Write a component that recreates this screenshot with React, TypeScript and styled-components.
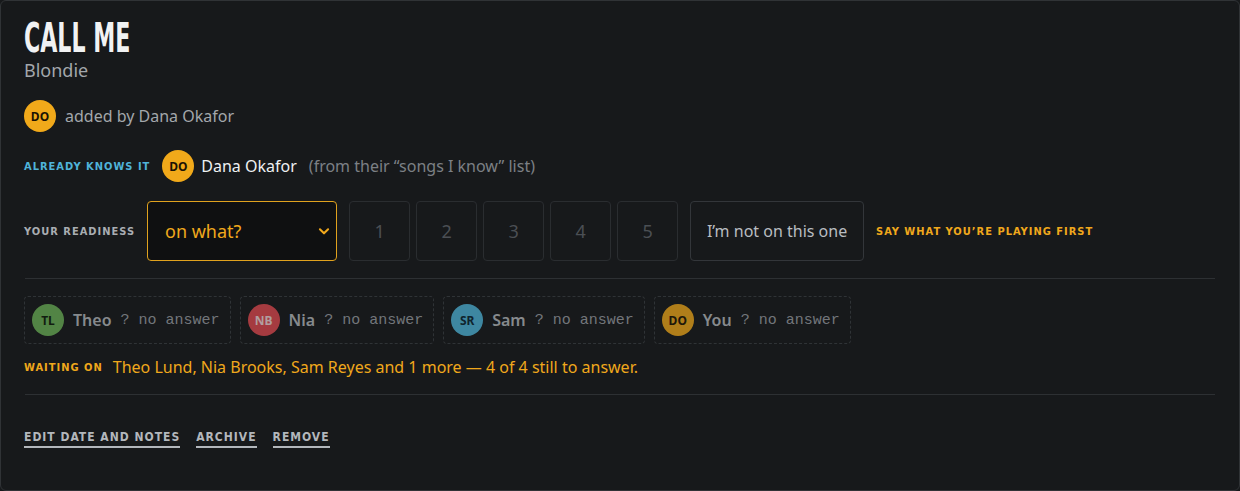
import styled, { createGlobalStyle } from 'styled-components';

const GlobalStyle = createGlobalStyle`
  html, body {
    margin: 0;
    padding: 0;
    background: #17191b;
  }
  * {
    box-sizing: border-box;
  }
`;

const people = [
  { initials: 'TL', name: 'Theo', color: '#6cb257', ink: '#10200c' },
  { initials: 'NB', name: 'Nia', color: '#e24a50', ink: '#f3d8d8' },
  { initials: 'SR', name: 'Sam', color: '#4fb6da', ink: '#0c2a36' },
  { initials: 'DO', name: 'You', color: '#f1a91a', ink: '#231703' },
];

export default function App() {
  return (
    <>
      <GlobalStyle />
      <Card>
        <Header>
          <Title>CALL ME</Title>
          <Artist>Blondie</Artist>
        </Header>

        <AddedRow>
          <Avatar $bg="#f1a91a" $ink="#1a1204">DO</Avatar>
          <Muted>added by Dana Okafor</Muted>
        </AddedRow>

        <KnowsRow>
          <Label $color="#4fb3d9">Already knows it</Label>
          <Avatar $bg="#f1a91a" $ink="#1a1204">DO</Avatar>
          <Name>Dana Okafor</Name>
          <Faint>(from their “songs I know” list)</Faint>
        </KnowsRow>

        <ReadyRow>
          <Label $color="#a9adb2">Your readiness</Label>
          <Select>
            <span>on what?</span>
            <svg width="14" height="14" viewBox="0 0 24 24" fill="none">
              <path d="M5 9l7 7 7-7" stroke="#f0a81c" strokeWidth="3.5" strokeLinecap="round" strokeLinejoin="round" />
            </svg>
          </Select>
          <Scores>
            {[1, 2, 3, 4, 5].map((n) => (
              <ScoreBox key={n}>{n}</ScoreBox>
            ))}
          </Scores>
          <NotOnBtn>I’m not on this one</NotOnBtn>
          <Label $color="#f0a81c">Say what you’re playing first</Label>
        </ReadyRow>

        <Divider $top={17} />

        <Chips>
          {people.map((p) => (
            <Chip key={p.initials}>
              <Avatar $bg={p.color} $ink={p.ink}>{p.initials}</Avatar>
              <ChipName>{p.name}</ChipName>
              <NoAnswer>? no answer</NoAnswer>
            </Chip>
          ))}
        </Chips>

        <WaitingRow>
          <Label $color="#f0a81c">Waiting on</Label>
          <WaitingText>Theo Lund, Nia Brooks, Sam Reyes and 1 more — 4 of 4 still to answer.</WaitingText>
        </WaitingRow>

        <Divider $top={16} />

        <Actions>
          <ActionLink>Edit date and notes</ActionLink>
          <ActionLink>Archive</ActionLink>
          <ActionLink>Remove</ActionLink>
        </Actions>
      </Card>
    </>
  );
}

const Card = styled.div`
  width: 1240px;
  height: 491px;
  border: 1px solid #303336;
  border-radius: 6px;
  background: #17191b;
  padding: 18px 23px 0 23px;
  font-family: 'Noto Sans', 'Open Sans', sans-serif;
  color: #e6e8ea;
  overflow: hidden;
`;

const Header = styled.div`
  display: flex;
  flex-direction: column;
`;

const Title = styled.h1`
  margin: 0;
  font-family: 'Liberation Sans Narrow', 'DejaVu Sans Condensed', 'Liberation Sans', sans-serif;
  font-weight: 700;
  font-size: 41px;
  line-height: 38px;
  color: #f1f2f3;
  transform: scaleX(0.6);
  transform-origin: left center;
  white-space: nowrap;
`;

const Artist = styled.div`
  font-size: 18px;
  line-height: 24px;
  color: #a3a7ab;
  margin-top: 1px;
`;

const AddedRow = styled.div`
  display: flex;
  align-items: center;
  gap: 9px;
  margin-top: 18px;
`;

const Avatar = styled.div<{ $bg: string; $ink: string }>`
  width: 32px;
  height: 32px;
  flex: none;
  border-radius: 50%;
  background: ${({ $bg }) => $bg};
  color: ${({ $ink }) => $ink};
  display: flex;
  align-items: center;
  justify-content: center;
  font-size: 12px;
  font-weight: 700;
`;

const Muted = styled.span`
  font-size: 16px;
  color: #a3a7ab;
`;

const Label = styled.span<{ $color: string }>`
  font-family: 'Liberation Sans Narrow', 'DejaVu Sans Condensed', 'Liberation Sans', sans-serif;
  font-weight: 700;
  font-size: 11px;
  letter-spacing: 1px;
  text-transform: uppercase;
  color: ${({ $color }) => $color};
  white-space: nowrap;
`;

const KnowsRow = styled.div`
  display: flex;
  align-items: center;
  margin-top: 18px;
  ${Label} {
    margin-right: 12px;
  }
  ${Avatar} {
    margin-right: 7px;
  }
`;

const Name = styled.span`
  font-size: 16px;
  color: #eef0f2;
  margin-right: 12px;
`;

const Faint = styled.span`
  font-size: 16px;
  color: #7c8085;
`;

const ReadyRow = styled.div`
  display: flex;
  align-items: center;
  margin-top: 19px;
  height: 60px;
  ${Label} {
    margin-right: 12px;
  }
`;

const Select = styled.div`
  width: 190px;
  height: 60px;
  border: 1px solid #e0a21e;
  border-radius: 4px;
  background: #0f1011;
  display: flex;
  align-items: center;
  justify-content: space-between;
  padding: 0 5px 0 17px;
  font-size: 18px;
  color: #f0a81c;
  margin-right: 12px;
`;

const Scores = styled.div`
  display: flex;
  gap: 6px;
  margin-right: 12px;
`;

const ScoreBox = styled.div`
  width: 61px;
  height: 60px;
  border: 1px solid #2a2d30;
  border-radius: 4px;
  display: flex;
  align-items: center;
  justify-content: center;
  font-size: 18px;
  color: #4b4f54;
`;

const NotOnBtn = styled.div`
  height: 60px;
  width: 174px;
  border: 1px solid #33363a;
  border-radius: 4px;
  display: flex;
  align-items: center;
  justify-content: center;
  font-size: 16px;
  color: #b9bdc1;
  margin-right: 12px;
`;

const Divider = styled.div<{ $top?: number }>`
  height: 1px;
  background: #2d3033;
  margin: ${({ $top }) => $top ?? 17}px 1px 0 1px;
`;

const Chips = styled.div`
  display: flex;
  gap: 9px;
  margin-top: 17px;
`;

const Chip = styled.div`
  height: 48px;
  display: flex;
  align-items: center;
  gap: 9px;
  padding: 0 10px 0 7px;
  border: 1px dashed #3a3e42;
  border-radius: 4px;
  opacity: 0.7;
`;

const ChipName = styled.span`
  font-size: 16px;
  font-weight: 600;
  color: #b6babe;
`;

const NoAnswer = styled.span`
  font-family: 'Liberation Mono', 'DejaVu Sans Mono', monospace;
  font-size: 15px;
  color: #9a9ea3;
  white-space: nowrap;
`;

const WaitingRow = styled.div`
  display: flex;
  align-items: center;
  gap: 10px;
  margin-top: 12px;
`;

const WaitingText = styled.span`
  font-size: 16px;
  color: #f0a81c;
`;

const Actions = styled.div`
  display: flex;
  gap: 16px;
  margin-top: 35px;
`;

const ActionLink = styled.a`
  font-family: 'Liberation Sans Narrow', 'DejaVu Sans Condensed', 'Liberation Sans', sans-serif;
  font-weight: 700;
  font-size: 12px;
  letter-spacing: 1px;
  text-transform: uppercase;
  color: #b3b7bc;
  padding-bottom: 2px;
  border-bottom: 2px solid #b3b7bc;
  cursor: pointer;
`;
